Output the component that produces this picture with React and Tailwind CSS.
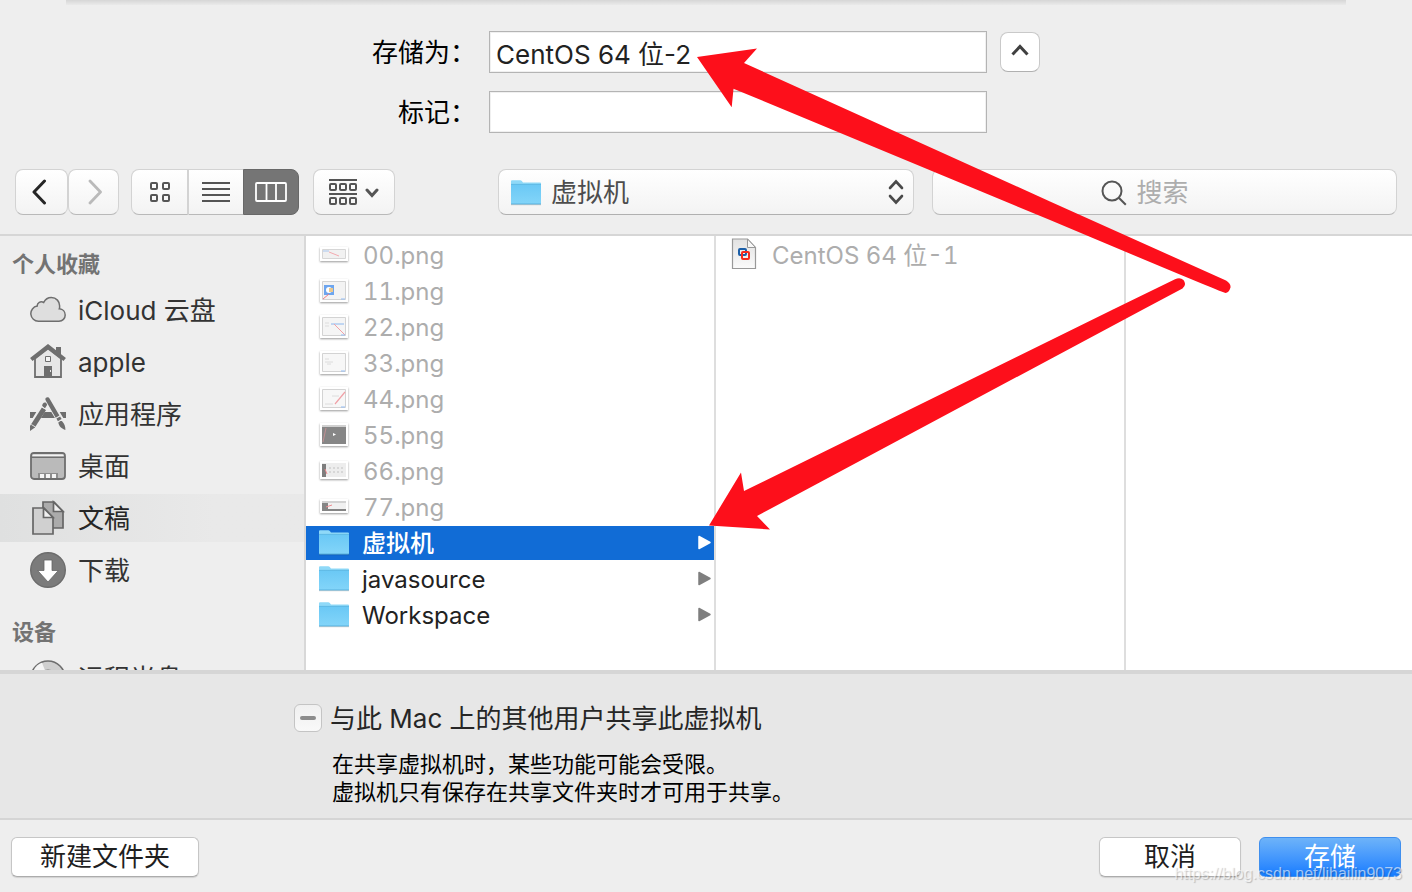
import { useEffect, useRef } from "react";

const svgBox = "h-9 w-9 shrink-0";

function Folder() {
  return (
    <svg viewBox="0 0 30 26" className="h-[26px] w-[30px] shrink-0" aria-hidden="true">
      <defs>
        <linearGradient id="folderFront" x1="0" y1="0" x2="0" y2="1">
          <stop offset="0" stopColor="#6ac8f5" />
          <stop offset="1" stopColor="#83d5f9" />
        </linearGradient>
      </defs>
      <path d="M0 24h30v1.200H0z" fill="#000" opacity=".2" />
      <path d="M0 1.200Q0 .2 1 .2h8.200q1 0 1.600.9l1.200 1.500H29q1 0 1 1V10H0z" fill="#8fd9f8" />
      <path d="M0 4.200h30V23.500q0 .8-.8.8H.8Q0 24.300 0 23.500z" fill="url(#folderFront)" />
      <path d="M0 4.400h30" stroke="#5bb5df" strokeWidth=".8" />
      <path d="M0 23.900h30" stroke="#56aedb" strokeWidth=".8" />
    </svg>
  );
}

function CloudIcon() {
  return (
    <svg viewBox="0 0 36 36" className={svgBox} aria-hidden="true">
      <path
        d="M8.500 29.200a7.600 7.600 0 0 1-1.300-15.100c-.2-3.300 3.500-5.300 6.500-3.600C15.300 7.300 18.200 5.500 21.300 5.500c5 0 8.600 4 8.300 9 .1.700 0 1.500-.3 2.300 3.500.2 5.900 2.900 5.900 6.200 0 3.400-2.600 6.200-6.300 6.200z"
        fill="#dedede" stroke="#6e6e6e" strokeWidth="1.500"
      />
    </svg>
  );
}

function HomeIcon() {
  return (
    <svg viewBox="0 0 36 36" className={svgBox} aria-hidden="true">
      <path d="M5 14.500 18 4.500l13 10V33H5z" fill="#e6e6e6" stroke="#6e6e6e" strokeWidth="1.800" />
      <path d="M26 3h5v9l-5-4z" fill="#6e6e6e" />
      <path d="M1.300 15.500 18 2.500l16.700 13" fill="none" stroke="#6e6e6e" strokeWidth="4" />
      <path d="M15.500 12.500h5v5h-5z" fill="#f4f4f4" stroke="#6e6e6e" strokeWidth="1" />
      <path d="M14 22h8v11h-8z" fill="#6e6e6e" />
      <path d="M20 26h1v2h-1z" fill="#e6e6e6" />
    </svg>
  );
}

function AppsIcon() {
  return (
    <svg viewBox="0 0 36 36" className={svgBox} aria-hidden="true">
      <g fill="#6e6e6e">
        <path d="M0 16h6.300l-3.600 6H0zM29.700 16H36v6h-2.700zM14.600 16h6.700l3.600 6H11z" />
        <path d="M15.300 3.300c0-2.300 3.300-2.800 4.200-.8L29.400 19.500l-3.700 2.200L16 5z" />
        <path d="m26.400 22.600 3.700-2.200 1.500 2.600-3.700 2.200z" />
        <path d="M28.300 26.600c1.400-1.600 3-2 4-1.200 2 2 3.300 4.900 3.100 8.600-3.700-1-6.600-3.600-7.100-7.400z" />
        <path d="m11.900 11.400 4.200 2.500L4.900 31.500 0 35v-5z" />
        <path d="M12.200 9.900c0-3 2.300-4.300 4-3l1 1.800-2.300 3.700z" />
      </g>
      <path d="m1.300 28.500 4.200 2.500M11.300 10.500l4.700 2.800" stroke="#eee" strokeWidth=".9" />
    </svg>
  );
}

function DesktopIcon() {
  return (
    <svg viewBox="0 0 36 36" className={svgBox} aria-hidden="true">
      <rect x="1" y="5" width="34" height="26" rx="3" fill="#bababa" stroke="#6e6e6e" strokeWidth="1.800" />
      <path d="M2.500 6.500h31v2.200h-31z" fill="#f2f2f2" />
      <path d="M1 9.300h34" stroke="#6e6e6e" strokeWidth="1.400" />
      <path d="M8 25h20v5H8z" fill="#8d8d8d" />
      <path d="M10 26h4v4h-4zM16 26h4v4h-4zM22 26h4v4h-4z" fill="#f4f4f4" />
    </svg>
  );
}

function DocsIcon() {
  return (
    <svg viewBox="0 0 36 36" className={svgBox} aria-hidden="true">
      <g stroke="#666" strokeWidth="1.700">
        <path d="M13 2h11l9 9.500V28H13z" fill="#ababab" />
        <path d="M23.500 2v9.500H33z" fill="#f0f0f0" />
        <path d="M3 8h11l9 9.500V34H3z" fill="#d0d0d0" />
        <path d="M13.500 8v9.500H23z" fill="#f0f0f0" />
      </g>
    </svg>
  );
}

function DownloadIcon() {
  return (
    <svg viewBox="0 0 36 36" className={svgBox} aria-hidden="true">
      <circle cx="18" cy="18" r="17.300" fill="#7b7b7b" stroke="#6c6c6c" strokeWidth="1.400" />
      <path d="M14 8h8v10.500h6.300L18 30 7.700 18.500H14z" fill="#fff" stroke="#666" strokeWidth=".8" />
    </svg>
  );
}

function DiscIcon() {
  return (
    <svg viewBox="0 0 36 36" className={svgBox} aria-hidden="true">
      <circle cx="18" cy="18" r="17" fill="#cfcfcf" stroke="#6e6e6e" strokeWidth="1.600" />
      <path d="M18 18 4 9.500Q7 4.500 12 2.800z" fill="#f5f5f5" />
      <circle cx="18" cy="18" r="8" fill="#bdbdbd" stroke="#777" strokeWidth="1.200" />
    </svg>
  );
}

function VmIcon() {
  return (
    <svg viewBox="0 0 26 32" className="mb-0.5 h-8 w-[26px] shrink-0" aria-hidden="true">
      <defs>
        <linearGradient id="paper" x1="0" y1="0" x2="0" y2="1">
          <stop offset="0" stopColor="#e2e2e2" />
          <stop offset="1" stopColor="#fbfbfb" />
        </linearGradient>
      </defs>
      <path d="M1.500 1h15l8 8.500v21h-23z" fill="url(#paper)" stroke="#999" strokeWidth="1.200" />
      <path d="M16.500 1v8.500h8z" fill="#f8f8f8" stroke="#999" strokeWidth="1" />
      <rect x="8" y="11" width="7" height="6" rx="1" fill="none" stroke="#1c5fa8" strokeWidth="2" />
      <rect x="11" y="14" width="7" height="7" rx="1" fill="none" stroke="#f6291c" strokeWidth="2" />
    </svg>
  );
}

const thumbs = {
  wide: (
    <g>
      <path d="M2.500 2.500h23v9h-23z" fill="#f1f1f1" stroke="#d6d6d6" />
      <path d="M3 4h6" stroke="#a9c6ef" />
      <path d="m9 5 10 4" stroke="#f3a9ae" />
    </g>
  ),
  blue: (
    <g>
      <path d="M2.500 2.500h23v18h-23z" fill="#f3f3f3" stroke="#d3d3d3" />
      <path d="M4 6h10v10H4z" fill="#6da5ee" />
      <circle cx="9" cy="11" r="3" fill="#fff" />
      <path d="M9 9h4v4H9z" fill="#edc98c" />
      <path d="m3 20 6-5" stroke="#f07d85" />
      <path d="M21 20h4" stroke="#93bdf5" />
    </g>
  ),
  menu: (
    <g>
      <path d="M2.500 2.500h23v18h-23z" fill="#f5f5f5" stroke="#d3d3d3" />
      <path d="M11 9h13" stroke="#8bb6ee" />
      <path d="m14 9 11 11" stroke="#f3a0a6" />
      <path d="M5 8h4M5 11h4" stroke="#ddd" />
      <path d="M21 20h4" stroke="#93bdf5" />
    </g>
  ),
  plain: (
    <g>
      <path d="M2.500 2.500h23v18h-23z" fill="#f7f7f7" stroke="#d3d3d3" />
      <path d="M5 8h4M7 13h4M5 11h8" stroke="#dcdcdc" />
      <path d="M21 20h4" stroke="#93bdf5" />
    </g>
  ),
  slash: (
    <g>
      <path d="M2.500 2.500h23v18h-23z" fill="#f7f7f7" stroke="#d3d3d3" />
      <path d="M25 5 15 17" stroke="#f0a0a6" strokeWidth="1.200" />
      <path d="M12 9h7M5 17h8" stroke="#dcdcdc" />
      <path d="M21 20h4" stroke="#93bdf5" />
    </g>
  ),
  dark: (
    <g>
      <path d="M2 2h24v19H2z" fill="#868686" />
      <path d="M2 2h24v2H2z" fill="#d0d0d0" />
      <path d="M6 5 3 19" stroke="#d99296" strokeWidth=".7" />
      <path d="m13 10 3 1.500-3 1.500z" fill="#fff" />
    </g>
  ),
  grid: (
    <g>
      <path d="M2 2h24v14H2z" fill="#ededed" />
      <path d="M2 3h4v13H2z" fill="#7d7d7d" />
      <path d="M9 7h16M9 11h16" stroke="#d0d0d0" strokeDasharray="2 2" strokeWidth="1.500" />
      <path d="m5 8 2 5" stroke="#ee8b90" />
    </g>
  ),
  strip: (
    <g>
      <path d="M2 2h24v10H2z" fill="#f1f1f1" />
      <path d="M2 2h24v2H2z" fill="#d3d3d3" />
      <path d="M2 4h6v8H2zM8 10h18v2H8z" fill="#858585" />
      <path d="m6 8 6-2" stroke="#ee8b90" />
    </g>
  ),
};

const thumbHeights = { wide: 14, strip: 14, grid: 18 };

function Thumb({ kind }) {
  const h = thumbHeights[kind] ?? 23;
  return (
    <span className="mb-0.5 flex w-[30px] shrink-0 justify-center">
      <svg viewBox={`0 0 28 ${h}`} width="28" height={h} className="bg-white shadow-[0_1px_2px_rgba(0,0,0,0.4)]" aria-hidden="true">
        {thumbs[kind]}
      </svg>
    </span>
  );
}

const places = [
  ["iCloud 云盘", CloudIcon],
  ["apple", HomeIcon],
  ["应用程序", AppsIcon],
  ["桌面", DesktopIcon],
  ["文稿", DocsIcon],
  ["下载", DownloadIcon],
];

const files = [
  ["00.png", "wide"],
  ["11.png", "blue"],
  ["22.png", "menu"],
  ["33.png", "plain"],
  ["44.png", "slash"],
  ["55.png", "dark"],
  ["66.png", "grid"],
  ["77.png", "strip"],
];

const folders = ["虚拟机", "javasource", "Workspace"];

function Place({ label, Icon, selected }) {
  return (
    <li>
      <button
        type="button"
        className={
          "flex h-12 w-full items-center gap-3 pl-[30px] text-left text-[26px] " +
          (selected ? "bg-linear-to-r from-[#dfe0e0] to-[#e9e9e9] to-70% text-[#262626]" : "text-[#333]")
        }
      >
        <Icon />
        {label}
      </button>
    </li>
  );
}

function Sidebar() {
  return (
    <nav aria-label="边栏" className="w-[306px] shrink-0 overflow-hidden border-r-2 border-[#d8d8d8]">
      <h2 className="flex h-[50px] items-center pl-3 pt-1.5 text-[22px] font-bold text-[#737373]">个人收藏</h2>
      <ul className="flex flex-col gap-1">
        {places.map(([label, Icon]) => (
          <Place key={label} label={label} Icon={Icon} selected={label === "文稿"} />
        ))}
      </ul>
      <h2 className="flex h-[60px] items-center pl-3 pt-4 text-[22px] font-bold text-[#737373]">设备</h2>
      <ul>
        <Place label="远程光盘" Icon={DiscIcon} />
      </ul>
    </nav>
  );
}

function FileColumn() {
  return (
    <ul className="flex w-[410px] shrink-0 flex-col gap-0.5 overflow-hidden border-r-2 border-[#dedede] pt-0.5 text-2xl">
      {files.map(([name, kind]) => (
        <li key={name}>
          <button type="button" disabled className="flex h-[34px] w-full items-center gap-3.5 pl-[13px] text-left tabular-nums text-[#adadad]">
            <Thumb kind={kind} />
            <span className="pt-0.5">{name}</span>
          </button>
        </li>
      ))}
      {folders.map((name, i) => (
        <li key={name}>
          <button
            type="button"
            className={
              "flex h-[34px] w-full items-center gap-[13px] pl-[13px] pr-[3px] text-left " +
              (i === 0 ? "bg-[#116cd6] font-medium text-white" : "text-[#222]")
            }
          >
            <Folder />
            <span className="flex-1 pt-0.5">{name}</span>
            <svg viewBox="0 0 14 16" className={"h-4 w-3.5 " + (i === 0 ? "text-white" : "text-[#7f7f7f]")} aria-hidden="true">
              <path d="M2 1.500v12L13 7.500z" fill="currentColor" stroke="currentColor" strokeWidth="1.500" strokeLinejoin="round" />
            </svg>
          </button>
        </li>
      ))}
    </ul>
  );
}

const toolButton =
  "flex h-[46px] items-center justify-center border border-[#d3d3d3] border-b-[#b9b9b9] bg-linear-to-b from-white to-[#f3f3f3]";

function Toolbar() {
  return (
    <div className="flex items-center px-[15px] pb-[19px] pt-9">
      <button type="button" aria-label="后退" className={toolButton + " w-[53px] rounded-lg"}>
        <svg viewBox="0 0 16 26" className="-ml-1.5 h-[26px] w-4" fill="none" stroke="#262626" strokeWidth="3" strokeLinecap="round" strokeLinejoin="round" aria-hidden="true">
          <path d="M13.500 2 3 13l10.500 11" />
        </svg>
      </button>
      <button type="button" aria-label="前进" disabled className={toolButton + " w-[51px] rounded-lg"}>
        <svg viewBox="0 0 16 26" className="h-[26px] w-4" fill="none" stroke="#bababa" strokeWidth="2.800" strokeLinecap="round" strokeLinejoin="round" aria-hidden="true">
          <path d="m4 2 10.500 11L4 24" />
        </svg>
      </button>
      <div role="group" aria-label="显示方式" className="ml-3 flex">
        <button type="button" aria-label="图标" className={toolButton + " w-[58px] rounded-l-lg border-r-2"}>
          <svg viewBox="0 0 22 20" className="h-5 w-[22px]" fill="none" stroke="#555" strokeWidth="2" aria-hidden="true">
            <rect x="2" y="1" width="6" height="6" rx="1" />
            <rect x="14" y="1" width="6" height="6" rx="1" />
            <rect x="2" y="13" width="6" height="6" rx="1" />
            <rect x="14" y="13" width="6" height="6" rx="1" />
          </svg>
        </button>
        <button type="button" aria-label="列表" className={toolButton + " w-[54px] border-x-0"}>
          <svg viewBox="0 0 28 20" className="h-5 w-7" stroke="#555" strokeWidth="2" aria-hidden="true">
            <path d="M0 1h28M0 7h28M0 13h28M0 19h28" />
          </svg>
        </button>
        <button type="button" aria-label="分栏" aria-pressed="true" className="flex h-[46px] w-14 items-center justify-center rounded-r-lg border border-[#686868] bg-[#757575]">
          <svg viewBox="0 0 32 20" className="h-5 w-8" fill="none" stroke="#fff" strokeWidth="1.800" aria-hidden="true">
            <rect x="1" y="1" width="30" height="18" rx="1" />
            <path d="M11.500 1v18M21 1v18" />
          </svg>
        </button>
      </div>
      <button type="button" aria-label="排列方式" className={toolButton + " ml-3.5 w-[82px] gap-2 rounded-lg"}>
        <svg viewBox="0 0 28 26" className="h-[26px] w-7" fill="none" stroke="#555" strokeWidth="2" aria-hidden="true">
          <path d="M0 1h28M0 15h28" />
          <rect x="1" y="5" width="6" height="6" rx="1" />
          <rect x="11" y="5" width="6" height="6" rx="1" />
          <rect x="21" y="5" width="6" height="6" rx="1" />
          <rect x="1" y="19" width="6" height="6" rx="1" />
          <rect x="11" y="19" width="6" height="6" rx="1" />
          <rect x="21" y="19" width="6" height="6" rx="1" />
        </svg>
        <svg viewBox="0 0 14 10" className="mt-0.5 h-2.5 w-3.5" fill="none" stroke="#555" strokeWidth="3" strokeLinecap="round" aria-hidden="true">
          <path d="m2 2 5 5.500L12 2" />
        </svg>
      </button>
      <div className="relative ml-[103px] min-w-0 flex-[416]">
        <select
          aria-label="位置"
          className="h-[46px] w-full appearance-none rounded-lg border border-[#d3d3d3] border-b-[#b0b0b0] bg-linear-to-b from-white to-[#f3f3f3] pl-[52px] text-[26px] text-[#4d4d4d]"
        >
          <option>虚拟机</option>
        </select>
        <span className="pointer-events-none absolute left-[13px] top-[11px]">
          <Folder />
        </span>
        <svg viewBox="0 0 16 26" className="pointer-events-none absolute right-2.5 top-2.5 h-[26px] w-4" fill="none" stroke="#4a4a4a" strokeWidth="2.600" strokeLinecap="round" aria-hidden="true">
          <path d="m2 9 6-6.500L14 9M2 17l6 6.500 6-6.500" />
        </svg>
      </div>
      <label className={toolButton + " ml-[18px] min-w-0 flex-[463] gap-2.5 rounded-lg"}>
        <svg viewBox="0 0 26 26" className="mt-0.5 h-[26px] w-[26px]" fill="none" stroke="#555" strokeWidth="2" aria-hidden="true">
          <circle cx="11" cy="11" r="9.500" />
          <path d="m17.800 17.800 7 7" />
        </svg>
        <input
          type="text"
          aria-label="搜索"
          placeholder="搜索"
          className="h-10 w-[92px] bg-transparent text-[26px] text-[#333] outline-none placeholder:text-[#adadad]"
        />
      </label>
    </div>
  );
}

function ShareOption() {
  const box = useRef(null);
  useEffect(() => {
    box.current.indeterminate = true;
  }, []);
  return (
    <section className="border-b-2 border-[#d5d5d5] bg-[#e7e7e7] pb-3 pl-[294px] pt-7">
      <div className="flex items-center gap-2">
        <span className="relative mb-0.5 flex">
          <input
            ref={box}
            id="share"
            type="checkbox"
            className="h-7 w-7 appearance-none rounded-md border border-[#c4c4c4] bg-linear-to-b from-[#f0f0f0] to-[#f9f9f9]"
          />
          <span className="pointer-events-none absolute left-1.5 top-3 h-1 w-4 rounded-full bg-[#8c8c8c]" />
        </span>
        <label htmlFor="share" className="text-[26px] leading-[34px] text-[#262626]">
          与此 Mac 上的其他用户共享此虚拟机
        </label>
      </div>
      <p className="pl-[38px] pt-3.5 text-[22px] leading-7 text-black">
        在共享虚拟机时，某些功能可能会受限。
        <br />
        虚拟机只有保存在共享文件夹时才可用于共享。
      </p>
    </section>
  );
}

const field =
  "h-[42px] w-full min-w-0 border border-[#b4b4b4] bg-white px-1.5 text-[26px] text-[#222] shadow-[inset_0_0_0_1px_#f0f0f0] outline-none";
const fieldLabel = "pt-0.5 text-right text-[26px] leading-10";
const pushButton =
  "h-[40px] rounded-md border border-[#c6c6c6] border-b-[#acacac] bg-white text-[26px] leading-none text-[#1f1f1f] shadow-[0_1px_1px_rgba(0,0,0,0.12)]";

export default function App() {
  return (
    <div className="relative flex h-screen flex-col overflow-hidden bg-[#eee] font-['Inter','Noto_Sans_CJK_SC',sans-serif]">
      <div className="mx-[66px] h-[5px] shrink-0 bg-linear-to-b from-[#d6d6d6] to-[#eaeaea]" />
      <form className="grid grid-cols-[476fr_498fr_412fr] items-center gap-x-[13px] gap-y-[18px] pt-[26px] text-black">
        <label htmlFor="name" className={fieldLabel}>存储为：</label>
        <input id="name" type="text" defaultValue="CentOS 64 位-2" className={field} />
        <button type="button" aria-label="收起" className="flex h-10 w-10 items-center justify-center rounded-lg border border-[#c9c9c9] border-b-[#b0b0b0] bg-white">
          <svg viewBox="0 0 18 12" className="mb-1 h-3 w-[18px]" fill="none" stroke="#404040" strokeWidth="3" aria-hidden="true">
            <path d="m1.500 10.500 7.500-8 7.500 8" />
          </svg>
        </button>
        <label htmlFor="tags" className={fieldLabel}>标记：</label>
        <input id="tags" type="text" className={field} />
      </form>
      <Toolbar />
      <main className="flex min-h-0 flex-1 border-b-4 border-t-2 border-[#d6d6d6] bg-white">
        <div className="flex shrink-0 bg-[#eee]">
          <Sidebar />
        </div>
        <FileColumn />
        <ul className="w-[410px] shrink-0 border-r-2 border-[#dedede] pt-0.5 text-2xl">
          <li>
            <button type="button" disabled className="flex h-[34px] w-full items-center gap-[15px] pl-[15px] text-left tabular-nums text-[#adadad]">
              <VmIcon />
              <span className="pt-0.5">CentOS 64 位-1</span>
            </button>
          </li>
        </ul>
      </main>
      <ShareOption />
      <footer className="flex gap-[18px] px-[11px] pb-[15px] pt-[17px]">
        <button type="button" className={pushButton + " mr-auto w-[188px]"}>新建文件夹</button>
        <button type="button" className={pushButton + " w-[142px]"}>取消</button>
        <button
          type="button"
          className="h-[40px] w-[142px] rounded-md border border-[#3f8fee] bg-linear-to-b from-[#6db3f9] to-[#127bff] text-[26px] leading-none text-white"
        >
          存储
        </button>
      </footer>
      <svg viewBox="0 0 1412 892" className="pointer-events-none absolute left-0 top-0 h-[892px] w-[1412px]" fill="#fd0f1b" aria-hidden="true">
        <path d="M697 57 757 48.500 744 63 1050 201.500 1226 280.500Q1231 283.500 1230.500 287.500 1229 292.500 1225.500 293 1222 292.500 1050 220L733.500 88.700 731.700 107.300z" />
        <path d="M709 525.500 741 472.500 744 491 1114 309 1175 279.300Q1180 277 1183.500 280 1187 285 1182.500 288.500L1143 309.500 757 516 770 529.500z" />
      </svg>
      <p className="pointer-events-none absolute bottom-2 right-2.5 font-['Liberation_Sans',sans-serif] text-base leading-5 text-white/60 [text-shadow:1px_1px_1px_rgba(0,0,0,0.22)]">
        https://blog.csdn.net/lihailin9073
      </p>
    </div>
  );
}
